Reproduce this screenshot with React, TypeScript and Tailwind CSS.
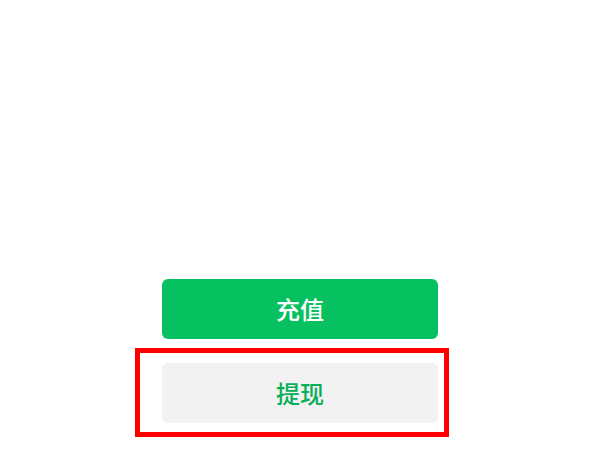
import React from "react";

const App: React.FC = () => {
    return (
        <div
            className="relative w-[600px] h-[450px] bg-white flex flex-col items-center pt-[279px]"
            style={{ fontFamily: '"Noto Sans CJK SC", "Noto Sans", sans-serif' }}
        >
            {/* Recharge */}
            <button className="w-[276px] h-[60px] rounded-[6px] bg-[#07c160] text-white text-[24px] font-medium leading-none">
                充值
            </button>

            {/* Withdraw */}
            <button className="mt-[24px] w-[276px] h-[60px] rounded-[6px] bg-[#f2f2f2] text-[#06ae56] text-[24px] font-medium leading-none">
                提现
            </button>

            {/* Highlight frame */}
            <div className="absolute left-[135px] top-[348px] w-[314px] h-[89px] border-[5px] border-[#ff0000] pointer-events-none" />
        </div>
    );
};

export default App;
